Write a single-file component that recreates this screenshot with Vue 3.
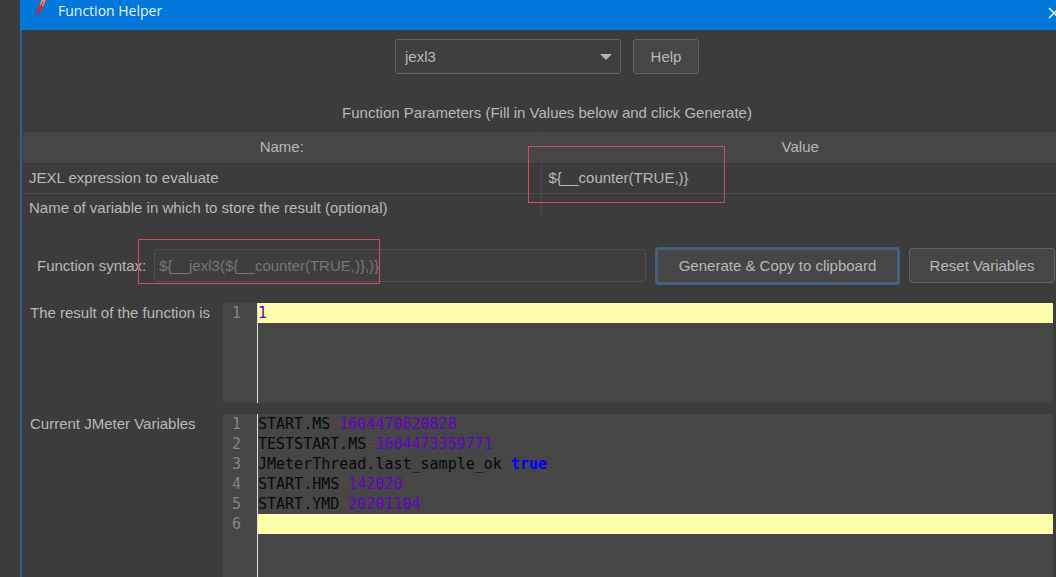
<script setup>
import { ref } from 'vue'

const selected = ref('jexl3')
const syntax = ref('${__jexl3(${__counter(TRUE,)},)}')

const parameters = [
  { name: 'JEXL expression to evaluate', value: '${__counter(TRUE,)}' },
  { name: 'Name of variable in which to store the result (optional)', value: '' },
]

const variables = [
  { key: 'START.MS', value: '1604470820828', kind: 'number' },
  { key: 'TESTSTART.MS', value: '1604473359771', kind: 'number' },
  { key: 'JMeterThread.last_sample_ok', value: 'true', kind: 'boolean' },
  { key: 'START.HMS', value: '142020', kind: 'number' },
  { key: 'START.YMD', value: '20201104', kind: 'number' },
]
</script>

<template>
  <div class="desktop">
    <main class="window">
      <header class="titlebar">
        <svg class="feather" viewBox="0 0 12 16" aria-hidden="true">
          <path d="M6 0 L4 5 L1 10 L2 15 L5 13 L8 7 L10 4 L11 0 Z" fill="#b8324f" />
          <path d="M6 0 L5 5 L8 7 L11 0 Z" fill="#d98f68" />
          <path d="M8 2 L5 9 L3 14" fill="none" stroke="#7a3b78" stroke-width="1" />
        </svg>
        <h1>Function Helper</h1>
        <button class="close" type="button" aria-label="Close">
          <svg viewBox="0 0 12 12" aria-hidden="true">
            <path d="M1 1 L11 11 M11 1 L1 11" fill="none" stroke="#fff" stroke-width="1.4" />
          </svg>
        </button>
      </header>

      <div class="chooser">
        <div class="combo">
          <select v-model="selected" aria-label="Function">
            <option>jexl3</option>
          </select>
          <svg viewBox="0 0 12 6" aria-hidden="true"><path d="M0 0 H12 L6 6 Z" fill="#b4b4b4" /></svg>
        </div>
        <button class="button help" type="button">Help</button>
      </div>

      <h2>Function Parameters (Fill in Values below and click Generate)</h2>

      <div class="parameters">
        <table>
          <thead>
            <tr><th>Name:</th><th>Value</th></tr>
          </thead>
          <tbody>
            <tr v-for="p in parameters" :key="p.name">
              <td>{{ p.name }}</td>
              <td>{{ p.value }}</td>
            </tr>
          </tbody>
        </table>
        <span class="mark mark-value"></span>
      </div>

      <div class="syntax">
        <label for="syntax">Function syntax:</label>
        <input id="syntax" v-model="syntax" type="text" readonly />
        <button class="button primary" type="button">Generate &amp; Copy to clipboard</button>
        <button class="button reset" type="button">Reset Variables</button>
        <span class="mark mark-syntax"></span>
      </div>

      <section class="output result">
        <h3>The result of the function is</h3>
        <div class="editor">
          <div class="line current"><span class="no">1</span><code><span class="number">1</span></code></div>
          <div class="rest"><span class="no"></span><code></code></div>
        </div>
      </section>

      <section class="output variables">
        <h3>Current JMeter Variables</h3>
        <div class="editor">
          <div v-for="(v, i) in variables" :key="v.key" class="line">
            <span class="no">{{ i + 1 }}</span>
            <code>{{ v.key }}<span class="eq">=</span><span :class="v.kind">{{ v.value }}</span></code>
          </div>
          <div class="line current"><span class="no">6</span><code></code></div>
          <div class="rest"><span class="no"></span><code></code></div>
        </div>
      </section>
    </main>
  </div>
</template>

<style>
body {
  margin: 0;
  background: #3c3c3c;
}
</style>

<style scoped>
* {
  box-sizing: border-box;
}

.desktop {
  min-height: 100vh;
  display: flex;
  padding-left: 20px;
  overflow: hidden;
  background: #3c3c3c;
  color: #b9b9b9;
  font: 15px/20px "Liberation Sans", Arial, sans-serif;
}

.window {
  flex: 1;
  min-width: 0;
  display: flex;
  flex-direction: column;
  border-left: 2px solid #315f8e;
}

h1, h2, h3 {
  margin: 0;
  font-size: inherit;
  font-weight: 400;
}

button, input, select {
  font: inherit;
  color: inherit;
}

.titlebar {
  display: flex;
  align-items: flex-start;
  height: 30px;
  margin-left: -2px;
  padding-left: 15px;
  background: #0077d9;
  color: #e6f3ff;
}

.feather {
  width: 12px;
  height: 16px;
}

.titlebar h1 {
  flex: 1;
  margin-left: 11px;
  font: 14px/22px "Open Sans", "Noto Sans", sans-serif;
}

.close {
  width: 8px;
  height: 22px;
  padding: 4px 0 0;
  border: 0;
  background: none;
  overflow: hidden;
}

.close svg {
  display: block;
  width: 12px;
  height: 12px;
}

.chooser {
  display: flex;
  justify-content: center;
  gap: 12px;
  padding: 9px 0 0 16px;
}

.combo {
  position: relative;
  width: 226px;
  height: 35px;
}

.combo select {
  width: 100%;
  height: 100%;
  padding: 0 9px;
  border: 1px solid #646464;
  border-radius: 3px;
  background: #3f3f3f;
  appearance: none;
}

.combo svg {
  position: absolute;
  right: 9px;
  top: 15px;
  width: 12px;
  height: 6px;
  pointer-events: none;
}

.button {
  height: 35px;
  padding: 0;
  border: 1px solid #646464;
  border-radius: 3px;
  background: #464646;
  white-space: nowrap;
}

.help {
  width: 66px;
}

h2 {
  padding: 29px 0 9px 16px;
  text-align: center;
}

.parameters {
  position: relative;
  margin: 0 -3px 0 1px;
}

table {
  width: 100%;
  table-layout: fixed;
  border-collapse: collapse;
}

th, td {
  height: 30px;
  padding: 0 6px;
  font-weight: 400;
  text-align: left;
}

th {
  height: 31px;
  border-bottom: 1px solid #353535;
  background: #464646;
  text-align: center;
}

th + th, td + td {
  border-left: 1px solid #4a4a4a;
}

td + td {
  padding-left: 7px;
}

tbody tr + tr td {
  height: 24px;
  padding-top: 4px;
  border-top: 1px solid #4d4d4d;
}

tbody tr:last-child {
  border-bottom: 1px solid #393939;
}

.mark {
  position: absolute;
  border: 1px solid #d0505c;
  pointer-events: none;
}

.mark-value {
  left: 505px;
  top: 14px;
  width: 197px;
  height: 57px;
}

.syntax {
  position: relative;
  display: flex;
  align-items: center;
  gap: 9px;
  margin-top: 28px;
  padding: 0 1px 0 15px;
}

.syntax label {
  width: 108px;
  white-space: nowrap;
}

.syntax input {
  flex: 1;
  min-width: 0;
  height: 33px;
  padding: 0 4px;
  border: 1px solid #515151;
  border-radius: 3px;
  background: #3e3e3e;
  color: #777;
}

.primary {
  width: 245px;
  height: 38px;
  border: 3px solid #43627f;
  border-radius: 4px;
}

.reset {
  width: 146px;
}

.mark-syntax {
  left: 116px;
  top: -8px;
  width: 242px;
  height: 45px;
}

.output {
  display: flex;
  padding: 0 3px 0 8px;
}

.output h3 {
  width: 193px;
  white-space: nowrap;
}

.result {
  height: 100px;
  margin-top: 18px;
}

.variables {
  flex: 1;
  margin-top: 11px;
}

.editor {
  flex: 1;
  min-width: 0;
  display: flex;
  flex-direction: column;
  background: #464646;
  font: 15px/20px "DejaVu Sans Mono", monospace;
}

.line, .rest {
  display: flex;
  min-height: 20px;
}

.rest {
  flex: 1;
}

.no {
  width: 35px;
  padding-right: 16px;
  border-right: 1px solid #e0e0e0;
  color: #858585;
  text-align: right;
}

code {
  flex: 1;
  color: #080808;
  font: inherit;
}

.current code {
  background: #fdfdac;
}

.number {
  color: #6400c8;
}

.boolean {
  color: #0000ff;
  font-weight: 700;
}

.eq {
  color: #694040;
}
</style>
